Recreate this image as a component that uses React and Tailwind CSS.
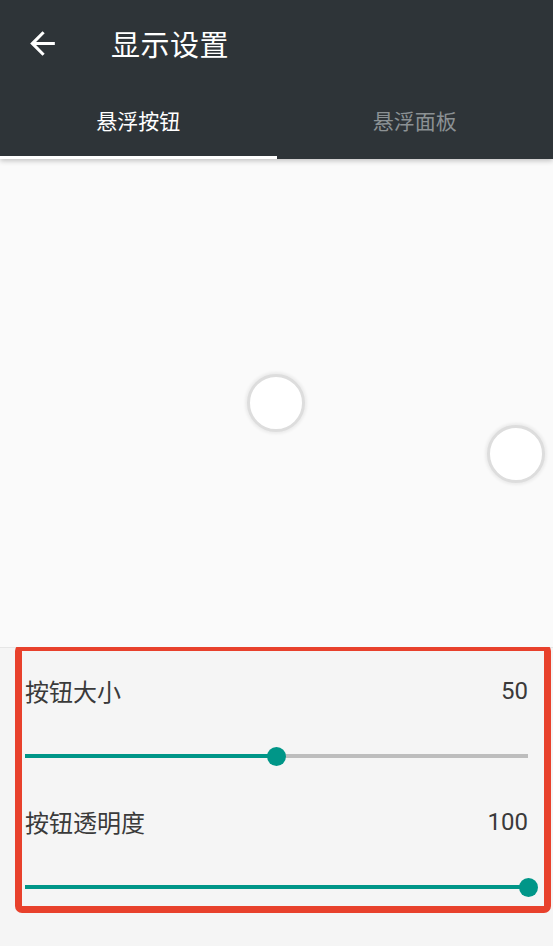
import React from "react";

const font = { fontFamily: '"Noto Sans CJK SC", Roboto, sans-serif' };

function Slider({ value }) {
  return (
    <div className="relative h-[30px] flex items-center">
      <div className="w-full h-[4px] bg-[#bdbdbd] relative">
        <div className="absolute left-0 top-0 h-full bg-[#009688]" style={{ width: `${value}%` }} />
      </div>
      <div
        className="absolute top-1/2 w-[19px] h-[19px] -mt-[9.5px] -ml-[9.5px] rounded-full bg-[#009688]"
        style={{ left: `${value}%` }}
      />
    </div>
  );
}

export default function App() {
  return (
    <div className="w-[553px] h-[946px] bg-[#f5f5f5] overflow-hidden flex flex-col" style={font}>
      <div className="relative z-10 bg-[#2e3438] shadow-[0_2px_5px_rgba(0,0,0,0.22)]">
        <div className="h-[86px] flex items-center">
          <svg className="ml-[24px] w-[37px] h-[37px]" viewBox="0 0 24 24" fill="#ffffff">
            <path d="M20 11H7.83l5.59-5.59L12 4l-8 8 8 8 1.41-1.41L7.83 13H20v-2z" />
          </svg>
          <div className="ml-[50px] text-white text-[29px] leading-none tracking-[0.5px]">显示设置</div>
        </div>
        <div className="h-[73px] flex">
          <div className="flex-1 flex flex-col">
            <div className="flex-1 flex items-center justify-center text-white text-[21px]">悬浮按钮</div>
            <div className="h-[3px] bg-white" />
          </div>
          <div className="flex-1 flex flex-col">
            <div className="flex-1 flex items-center justify-center text-[#8b9194] text-[21px]">悬浮面板</div>
            <div className="h-[3px]" />
          </div>
        </div>
      </div>
      <div className="relative h-[488px] bg-[#fafafa] shrink-0">
        <div className="absolute left-[247px] top-[215px] w-[58px] h-[58px] rounded-full bg-white border-[3px] border-[#dddddd] shadow-[0_0_3px_2px_rgba(0,0,0,0.06)]" />
        <div className="absolute left-[487px] top-[266px] w-[58px] h-[58px] rounded-full bg-white border-[3px] border-[#dddddd] shadow-[0_0_3px_2px_rgba(0,0,0,0.06)]" />
      </div>
      <div className="flex-1 border-t border-[#e6e6e6] bg-[#f5f5f5]">
        <div className="-mt-[4px] ml-[15px] mr-[2px] h-[269px] border-[7px] border-[#e8412c] rounded-[7px] pl-[3px] pr-[16px] pt-[24px]">
          <div className="flex items-center justify-between h-[32px] text-[24px] text-[#3a3a3a]">
            <span>按钮大小</span>
            <span className="font-['Roboto'] text-[24px]">50</span>
          </div>
          <div className="mt-[34px]">
            <Slider value={50} />
          </div>
          <div className="mt-[35px] flex items-center justify-between h-[32px] text-[24px] text-[#3a3a3a]">
            <span>按钮透明度</span>
            <span className="font-['Roboto'] text-[24px]">100</span>
          </div>
          <div className="mt-[34px]">
            <Slider value={100} />
          </div>
        </div>
      </div>
    </div>
  );
}
